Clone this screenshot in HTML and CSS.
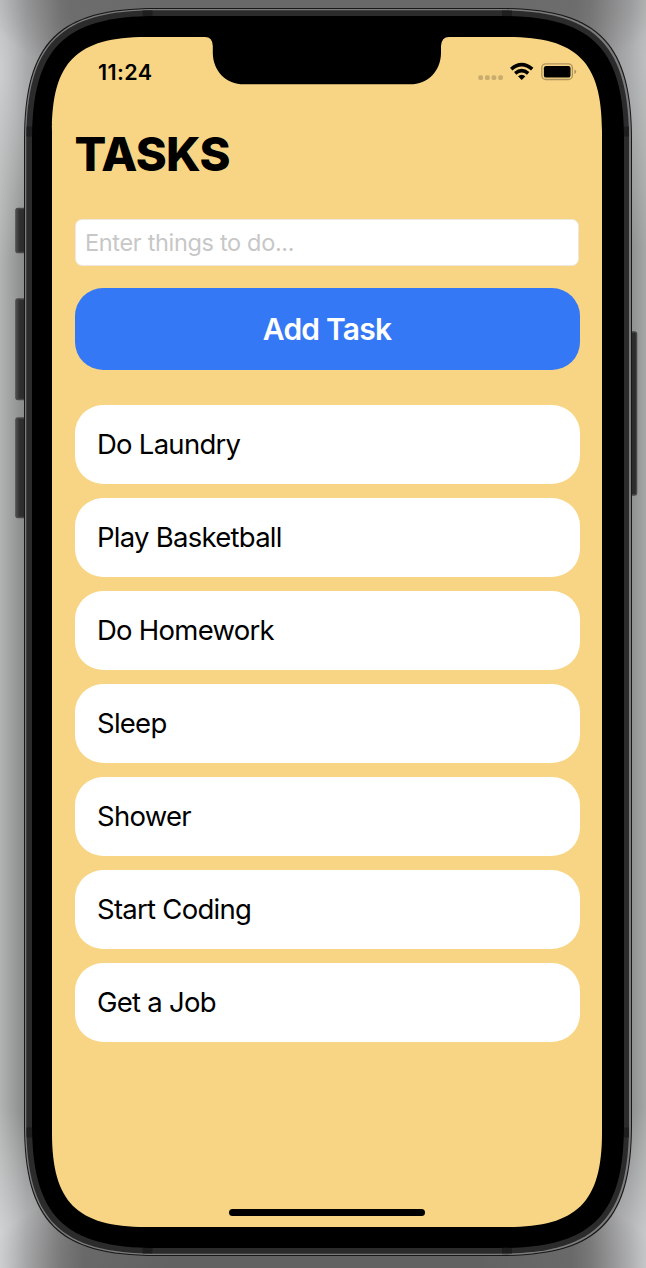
FILE: index.html
```
<!DOCTYPE html>
<html lang="en">
<head>
<meta charset="utf-8">
<title>Tasks</title>
<link rel="stylesheet" href="styles.css">
</head>
<body>
<div class="stage">
  <svg class="device" viewBox="0 0 646 1268" aria-hidden="true">
    <defs>
      <linearGradient id="key" x1="0" x2="1" y1="0" y2="0">
        <stop offset="0" stop-color="#505050"/><stop offset=".3" stop-color="#303030"/><stop offset="1" stop-color="#292929"/>
      </linearGradient>
    </defs>
    <g fill="url(#key)" stroke="#484848" stroke-width="1.5">
      <rect x="16" y="208.500" width="12" height="44" rx="2"/>
      <rect x="16" y="299" width="12" height="100.500" rx="2"/>
      <rect x="16" y="418" width="12" height="99.500" rx="2"/>
      <rect x="626" y="332" width="10.500" height="163" rx="2"/>
    </g>
    <path class="edge" d="M24 140C24 42 58 8 156 8H500C598 8 632 42 632 140V1124C632 1222 598 1256 500 1256H156C58 1256 24 1222 24 1124Z"/>
    <path class="rim" d="M25 140C25 43 59 9 156 9H500C597 9 631 43 631 140V1124C631 1221 597 1255 500 1255H156C59 1255 25 1221 25 1124Z"/>
    <path class="band" d="M26.300 140C26.300 44 60 10.300 156 10.300H499C595 10.300 629 44 629 140V1124C629 1220 595 1253.700 499 1253.700H156C60 1253.700 26.300 1220 26.300 1124Z"/>
    <path class="antenna" d="M142.500 10.500h10v6h-10zM502 10.500h10v6h-10zM142.500 1247.500h10v6h-10zM502 1247.500h10v6h-10zM26.500 126.500h6v10h-6zM623.500 126.500h5.500v10h-5.500zM26.500 1127.500h6v10h-6zM623.500 1127.500h5.500v10h-5.500z"/>
    <path class="bezel" d="M32 140C32 48 64 16 156 16H500C592 16 624 48 624 140V1124C624 1216 592 1248 500 1248H156C64 1248 32 1216 32 1124Z"/>
    <path class="glass" d="M52 131C52 62 77 37 146 37H205Q212.500 37 212.800 46V53C213 71 226 84.300 244 84.300H410C428 84.300 440.800 71 441 53V46Q441.500 37 449 37H508C577 37 602 62 602 131V1133C602 1202 577 1227 508 1227H146C77 1227 52 1202 52 1133Z"/>
  </svg>
  <main class="screen">
    <header class="status">
      <span class="clock">11:24</span>
      <svg class="indicators" width="100" height="20" viewBox="0 0 100 20" aria-hidden="true">
        <g fill="#c8ad6e"><rect x="0.300" y="13.200" width="4.700" height="4.700" rx="1.600"/><rect x="7" y="13.200" width="4.700" height="4.700" rx="1.600"/><rect x="13.600" y="13.200" width="4.700" height="4.700" rx="1.600"/><rect x="20.200" y="13.200" width="4.700" height="4.700" rx="1.600"/></g>
        <g fill="none" stroke="#000" stroke-width="3.600"><path d="M33.200 7.100Q43.700-1.800 54.200 7.100"/><path d="M37.200 11.300Q43.700 5.800 50.200 11.300"/></g>
        <path d="M40 14.300Q43.700 11.200 47.400 14.300L43.700 17.900Z"/>
        <rect x="63.800" y="1.900" width="30.600" height="15.600" rx="4" fill="none" stroke="#ad945e" stroke-width="1.300"/>
        <rect x="65.900" y="4" width="26.600" height="11.600" rx="2.200"/>
        <path d="M96.400 7.500Q98.300 8.200 98.300 9.700T96.400 11.900Z" fill="#ad945e"/>
      </svg>
    </header>
    <h1 class="title">TASKS</h1>
    <input class="entry" type="text" placeholder="Enter things to do..." aria-label="New task">
    <button class="add" type="button">Add Task</button>
    <ul class="tasks">
      <li>Do Laundry</li>
      <li>Play Basketball</li>
      <li>Do Homework</li>
      <li>Sleep</li>
      <li>Shower</li>
      <li>Start Coding</li>
      <li>Get a Job</li>
    </ul>
    <div class="home"></div>
  </main>
</div>
</body>
</html>
```
FILE: styles.css
```
* { box-sizing: border-box; }
body { margin: 0; font-family: Inter, "Liberation Sans", sans-serif; color: #000; }
/* The gradients form the soft shadow the phone casts on the desktop */
.stage {
  position: relative;
  width: 646px;
  height: 1268px;
  overflow: hidden;
  padding: 37px 44px 41px 52px;
  background:
    radial-gradient(ellipse 340px 110px at 50% 0, #696969 45%, rgba(105, 105, 105, 0)),
    radial-gradient(ellipse 340px 110px at 50% 100%, #626262 45%, rgba(98, 98, 98, 0)),
    radial-gradient(ellipse 75px 190px at 0 70px, rgba(218, 219, 221, .65), rgba(218, 219, 221, 0)),
    radial-gradient(ellipse 75px 190px at 100% 60px, rgba(205, 206, 208, .6), rgba(205, 206, 208, 0)),
    radial-gradient(ellipse 85px 160px at 0 100%, rgba(226, 227, 229, .8), rgba(226, 227, 229, 0)),
    radial-gradient(ellipse 75px 160px at 100% 100%, rgba(218, 219, 221, .8), rgba(218, 219, 221, 0)),
    linear-gradient(90deg, #b2b4b3, #868787 26px, #707070 60px, #707070 590px, #8c8d8d 630px, #a5a7a6);
}
.device { position: absolute; inset: 0; width: 646px; height: 1268px; }
.edge { fill: #171717; }
.rim { fill: #7b7b7b; }
.band { fill: #2b2b2b; }
.antenna { fill: #1e1e1e; }
.bezel { fill: #000; }
.glass { fill: #f8d584; }
.screen {
  position: relative;
  display: flex;
  flex-direction: column;
  height: 1190px;
  padding: 0 23px 11px;
}
.status {
  display: flex;
  justify-content: space-between;
  height: 70px;
  padding: 25px 1px 0 23px;
}
.clock { font-size: 21.500px; font-weight: 600; line-height: 21px; letter-spacing: .4px; }
.title { margin: 18px 0 0 -.5px; height: 58px; font-size: 47px; line-height: 58px; font-weight: 800; letter-spacing: -.75px; }
.entry {
  width: 504px;
  height: 47px;
  margin: 36px 0 22px;
  padding: 0 9px;
  border: 1px solid #eee8dc;
  border-radius: 7px;
  background: #fff;
  font: 400 23.500px/45px Inter, sans-serif;
  letter-spacing: -.33px;
}
.entry::placeholder { color: #c7c7c7; opacity: 1; }
.add {
  height: 82px;
  margin: 0 -.5px 35px;
  padding: 0;
  border: 0;
  border-radius: 28px;
  background: #3478f6;
  color: #fff;
  font: 600 30px/82px Inter, sans-serif;
  letter-spacing: -.8px;
}
.tasks { display: flex; flex-direction: column; gap: 14px; margin: 0 -.5px; padding: 0; list-style: none; }
.tasks li {
  height: 79px;
  padding-left: 22.500px;
  border-radius: 28px;
  background: #fff;
  font-size: 27.500px;
  line-height: 79px;
  letter-spacing: -.74px;
}
.home { width: 196px; height: 7px; margin: auto auto 0 154px; border-radius: 4px; background: #000; }
```
